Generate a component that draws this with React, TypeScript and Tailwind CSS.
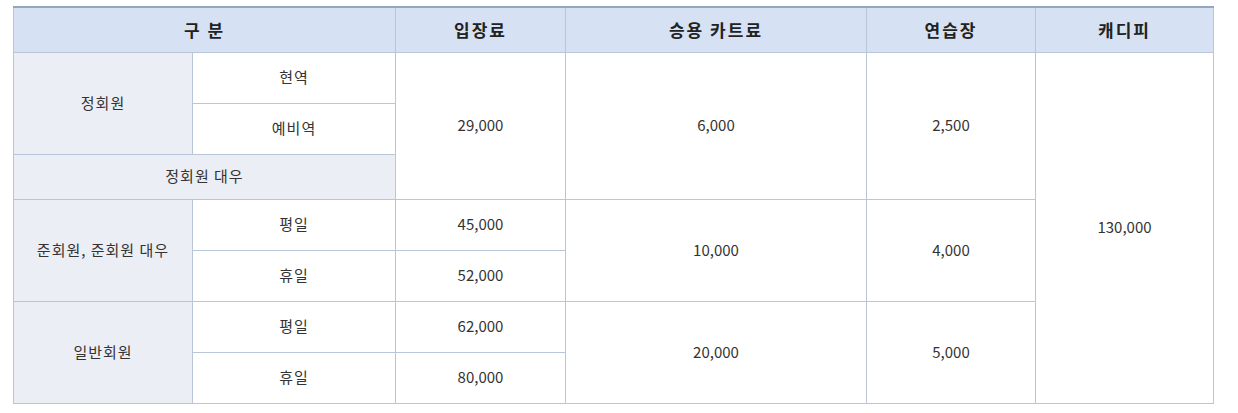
const border = 'border border-[#b9c6d8]'
const head = `${border} border-t-2 border-t-[#95a6c0] bg-[#d6e2f3] text-[17px] font-bold tracking-[2px] text-[#222]`
const label = `${border} bg-[#ebeef4] text-[15px] tracking-[1px] text-[#333]`
const cell = `${border} bg-white text-[15px] tracking-[1px] text-[#333]`
const num = `${border} bg-white text-[15px] text-[#333]`

export default function App() {
  return (
    <div className="bg-white w-[1238px] h-[413px] pt-[6px] pl-[13px]" style={{ fontFamily: '"Noto Sans CJK KR", "Noto Sans", sans-serif' }}>
      <table className="w-[1200px] border-collapse table-fixed text-center">
        <colgroup>
          <col className="w-[179px]" />
          <col className="w-[203px]" />
          <col className="w-[170px]" />
          <col className="w-[301px]" />
          <col className="w-[169px]" />
          <col className="w-[178px]" />
        </colgroup>
        <thead>
          <tr className="h-[45px]">
            <th colSpan={2} className={head}>구 분</th>
            <th className={head}>입장료</th>
            <th className={head}>승용 카트료</th>
            <th className={head}>연습장</th>
            <th className={head}>캐디피</th>
          </tr>
        </thead>
        <tbody>
          <tr className="h-[51px]">
            <td rowSpan={2} className={label}>정회원</td>
            <td className={cell}>현역</td>
            <td rowSpan={3} className={num}>29,000</td>
            <td rowSpan={3} className={num}>6,000</td>
            <td rowSpan={3} className={num}>2,500</td>
            <td rowSpan={7} className={num}>130,000</td>
          </tr>
          <tr className="h-[51px]">
            <td className={cell}>예비역</td>
          </tr>
          <tr className="h-[45px]">
            <td colSpan={2} className={label}>정회원 대우</td>
          </tr>
          <tr className="h-[51px]">
            <td rowSpan={2} className={label}>준회원, 준회원 대우</td>
            <td className={cell}>평일</td>
            <td className={num}>45,000</td>
            <td rowSpan={2} className={num}>10,000</td>
            <td rowSpan={2} className={num}>4,000</td>
          </tr>
          <tr className="h-[51px]">
            <td className={cell}>휴일</td>
            <td className={num}>52,000</td>
          </tr>
          <tr className="h-[51px]">
            <td rowSpan={2} className={label}>일반회원</td>
            <td className={cell}>평일</td>
            <td className={num}>62,000</td>
            <td rowSpan={2} className={num}>20,000</td>
            <td rowSpan={2} className={num}>5,000</td>
          </tr>
          <tr className="h-[51px]">
            <td className={cell}>휴일</td>
            <td className={num}>80,000</td>
          </tr>
        </tbody>
      </table>
    </div>
  )
}
